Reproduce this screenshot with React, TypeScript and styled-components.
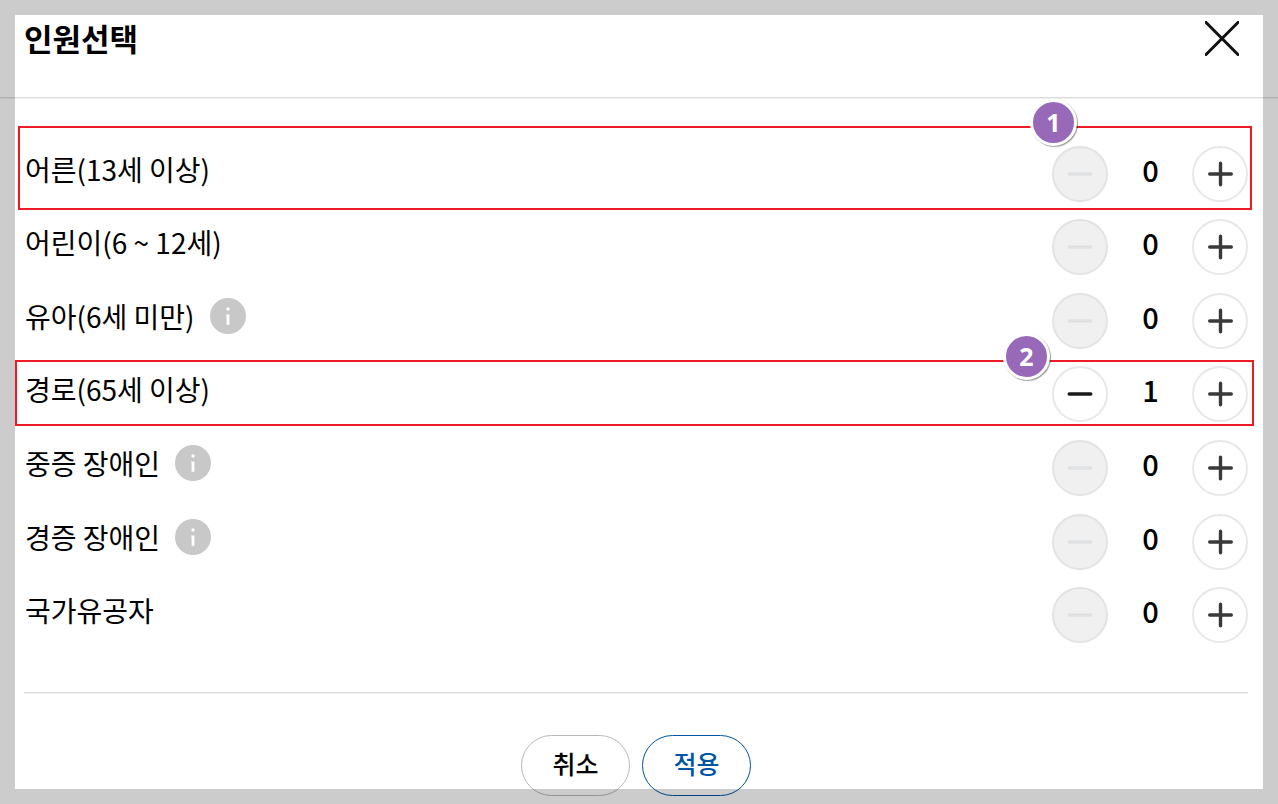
import React, { useState } from "react";
import styled, { createGlobalStyle } from "styled-components";

const GlobalStyle = createGlobalStyle`
  * { box-sizing: border-box; }
  body {
    margin: 0;
    background: #fff;
    color: #000;
    font-family: "Noto Sans CJK KR", "Noto Sans", sans-serif;
  }
  button { font-family: inherit; cursor: pointer; padding: 0; }
  button:disabled { cursor: default; }
`;

const Dialog = styled.main`
  min-height: 100vh;
  position: relative;
`;

const Frame = styled.div`
  position: fixed;
  inset: 0;
  border: 15px solid rgba(0, 0, 0, 0.2);
  pointer-events: none;
  z-index: 5;
`;

const Header = styled.header`
  display: flex;
  justify-content: space-between;
  align-items: flex-start;
  padding: 14px 39px 35px 24px;
  border-bottom: 1px solid #dcdcdc;
  box-shadow: 0 1px #f0f0f0;
`;

const Title = styled.h1`
  margin: 0;
  font-size: 31px;
  line-height: 48px;
  font-weight: 700;
`;

const CloseButton = styled.button`
  display: flex;
  margin-top: 7px;
  border: 0;
  background: none;
`;

const Content = styled.section`
  padding: 39px 30px 8px 24px;
`;

const List = styled.ul`
  display: grid;
  grid-auto-rows: 1fr;
  min-height: 515px;
  margin: 0;
  padding: 0;
  list-style: none;
`;

const Row = styled.li`
  position: relative;
  display: flex;
  align-items: center;
  justify-content: space-between;
`;

const LabelGroup = styled.div`
  display: flex;
  align-items: center;
  gap: 15px;
  padding: 0 0 10px 1px;
`;

const Label = styled.span`
  font-size: 28px;
  line-height: 36px;
`;

const InfoButton = styled.button`
  display: flex;
  border: 0;
  background: none;
`;

const Stepper = styled.div`
  display: flex;
  align-items: center;
`;

const StepButton = styled.button`
  display: grid;
  place-items: center;
  width: 56px;
  height: 56px;
  border: 2px solid #e8e8e8;
  border-radius: 50%;
  background: #fff;
  color: #3a3a3a;

  &:disabled {
    background: #f0f0f0;
    border-color: #e3e3e3;
    color: #dfe1e2;
  }
`;

const Count = styled.output`
  width: 84px;
  padding: 0 0 10px 1px;
  text-align: center;
  font-size: 29px;
  line-height: 36px;
  font-weight: 500;
`;

const Highlight = styled.div<{ $inset: string }>`
  position: absolute;
  inset: ${(p) => p.$inset};
  border: 2px solid #ed1c24;
  pointer-events: none;
`;

const Badge = styled.span<{ $right: number }>`
  position: absolute;
  top: -29px;
  right: ${(p) => p.$right}px;
  width: 47px;
  height: 47px;
  border: 3px solid #fff;
  border-radius: 50%;
  background: #9769b8;
  box-shadow: 1px 1px 1px rgba(0, 0, 0, 0.4);
  color: #fff;
  font: 700 25px/41px "Noto Sans", sans-serif;
  text-align: center;
`;

const Footer = styled.footer`
  display: flex;
  justify-content: center;
  gap: 12px;
  margin-top: 40px;
  padding-top: 42px;
  border-top: 1px solid #dcdcdc;
  box-shadow: inset 0 1px #f0f0f0;
`;

const ActionButton = styled.button<{ $primary?: boolean }>`
  width: 109px;
  height: 61px;
  padding-bottom: 5px;
  border: 1px solid ${(p) => (p.$primary ? "#0054a6" : "#b8b8b8")};
  border-radius: 31px;
  background: #fff;
  color: ${(p) => (p.$primary ? "#0054a6" : "#000")};
  font-size: 25px;
  line-height: 36px;
  font-weight: 500;
`;

const CloseIcon = () => (
  <svg width="34" height="35" viewBox="0 0 34 35" stroke="#111" strokeWidth="3" aria-hidden="true">
    <path d="M0 0.5L34 34.5M34 0.5L0 34.5" />
  </svg>
);

const InfoIcon = () => (
  <svg width="36" height="36" viewBox="0 0 36 36" aria-hidden="true">
    <circle cx="18" cy="18" r="18" fill="#c8c8c8" />
    <circle cx="18" cy="11" r="1.7" fill="#fff" />
    <path d="M16 16.4h3.4v10.4h-2.8v-9.4H16z" fill="#fff" />
  </svg>
);

const MinusIcon = () => (
  <svg width="26" height="26" viewBox="0 0 26 26" stroke="currentColor" strokeWidth="3.4" strokeLinecap="round" aria-hidden="true">
    <path d="M2.2 13H23.8" />
  </svg>
);

const PlusIcon = () => (
  <svg width="26" height="26" viewBox="0 0 26 26" stroke="currentColor" strokeWidth="3.4" strokeLinecap="round" aria-hidden="true">
    <path d="M2.7 13H24.3M13.5 2.2V23.8" />
  </svg>
);

const DecreaseButton = styled(StepButton)`
  color: #1a1a1a;
`;

interface Passenger {
  id: string;
  label: string;
  info?: boolean;
  mark?: { text: string; inset: string; right: number };
}

const passengers: Passenger[] = [
  { id: "adult", label: "어른(13세 이상)", mark: { text: "1", inset: "-11px -4px 1px -6px", right: 173 } },
  { id: "child", label: "어린이(6 ~ 12세)" },
  { id: "infant", label: "유아(6세 미만)", info: true },
  { id: "senior", label: "경로(65세 이상)", mark: { text: "2", inset: "2px -6px 5px -9px", right: 202 } },
  { id: "severe", label: "중증 장애인", info: true },
  { id: "mild", label: "경증 장애인", info: true },
  { id: "veteran", label: "국가유공자" },
];

const initialCounts: Record<string, number> = { senior: 1 };

export default function App() {
  const [counts, setCounts] = useState(initialCounts);
  const change = (id: string, step: number) =>
    setCounts((c) => ({ ...c, [id]: Math.max(0, (c[id] ?? 0) + step) }));

  return (
    <Dialog>
      <GlobalStyle />
      <Header>
        <Title>인원선택</Title>
        <CloseButton type="button" aria-label="닫기">
          <CloseIcon />
        </CloseButton>
      </Header>
      <Content>
        <List>
          {passengers.map(({ id, label, info, mark }) => {
            const count = counts[id] ?? 0;
            return (
              <Row key={id}>
                <LabelGroup>
                  <Label id={id}>{label}</Label>
                  {info && (
                    <InfoButton type="button" aria-label={`${label} 안내`}>
                      <InfoIcon />
                    </InfoButton>
                  )}
                </LabelGroup>
                <Stepper role="group" aria-labelledby={id}>
                  <DecreaseButton type="button" aria-label="빼기" disabled={count === 0} onClick={() => change(id, -1)}>
                    <MinusIcon />
                  </DecreaseButton>
                  <Count>{count}</Count>
                  <StepButton type="button" aria-label="더하기" onClick={() => change(id, 1)}>
                    <PlusIcon />
                  </StepButton>
                </Stepper>
                {mark && (
                  <Highlight $inset={mark.inset}>
                    <Badge $right={mark.right}>{mark.text}</Badge>
                  </Highlight>
                )}
              </Row>
            );
          })}
        </List>
        <Footer>
          <ActionButton type="button">취소</ActionButton>
          <ActionButton type="button" $primary>
            적용
          </ActionButton>
        </Footer>
      </Content>
      <Frame />
    </Dialog>
  );
}
